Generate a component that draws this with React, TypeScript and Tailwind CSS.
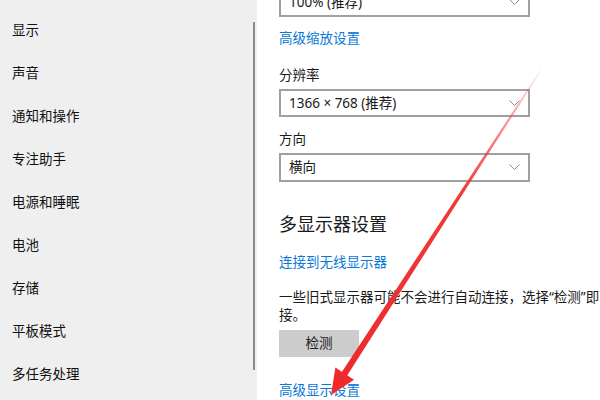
const font = { fontFamily: '"Noto Sans", "Noto Sans CJK SC", sans-serif' };

const navItems = ["显示", "声音", "通知和操作", "专注助手", "电源和睡眠", "电池", "存储", "平板模式", "多任务处理"];

function Chevron() {
  return (
    <svg width="11" height="6" viewBox="0 0 11 6" className="shrink-0">
      <path d="M0.5 0.5 L5.5 5.5 L10.5 0.5" fill="none" stroke="#8a8a8a" strokeWidth="1" />
    </svg>
  );
}

function Select({ value, className = "" }: { value: string; className?: string }) {
  return (
    <div
      className={`flex h-[29px] w-[251px] items-center justify-between border-2 border-[#a0a0a0] pl-[8px] pr-[8px] text-[13.5px] text-[#1a1a1a] ${className}`}
    >
      <span>{value}</span>
      <Chevron />
    </div>
  );
}

function Arrow() {
  // shaft from (541,70) to head base (344,374), head tip (331,395)
  return (
    <svg className="pointer-events-none absolute inset-0" width="600" height="400" viewBox="0 0 600 400">
      <defs>
        <linearGradient id="shaft" x1="541" y1="70" x2="344" y2="374" gradientUnits="userSpaceOnUse">
          <stop offset="0" stopColor="#f23a3a" stopOpacity="0.05" />
          <stop offset="0.15" stopColor="#f23a3a" stopOpacity="0.5" />
          <stop offset="0.4" stopColor="#f03030" stopOpacity="0.95" />
          <stop offset="1" stopColor="#ee2a2a" />
        </linearGradient>
      </defs>
      <polygon points="541.5,70.4 540.5,69.6 341.5,372.5 347,375.8" fill="url(#shaft)" />
      <polygon points="331,395 335.4,367.6 354,379.8" fill="#ee2a2a" />
    </svg>
  );
}

export default function App() {
  return (
    <div className="relative flex h-[400px] w-[600px] overflow-hidden bg-white" style={font}>
      <div className="flex h-full w-[257px] shrink-0 bg-[#efefef]">
        <div className="flex w-[253px] flex-col pt-[9px] pl-[12px]">
          {navItems.map((item) => (
            <div key={item} className="flex h-[43px] shrink-0 items-center text-[13.5px] text-[#111]">
              {item}
            </div>
          ))}
        </div>
        <div className="mt-[22px] h-[348px] w-[2px] bg-[#8c8c8c]" />
      </div>

      <div className="flex flex-col pl-[22px] -mt-[12px]">
        <Select value="100% (推荐)" />
        <div className="mt-[11px] h-[20px] text-[13.5px] leading-[20px] text-[#0a78d7]">高级缩放设置</div>
        <div className="mt-[17px] h-[20px] text-[13.5px] leading-[20px] text-[#1a1a1a]">分辨率</div>
        <Select value="1366 × 768 (推荐)" className="mt-[4px]" />
        <div className="mt-[12px] h-[20px] text-[13.5px] leading-[20px] text-[#1a1a1a]">方向</div>
        <Select value="横向" className="mt-[4px]" />
        <div className="mt-[29px] h-[26px] text-[18px] leading-[26px] text-[#1a1a1a]">多显示器设置</div>
        <div className="mt-[15px] h-[20px] text-[13.5px] leading-[20px] text-[#0a78d7]">连接到无线显示器</div>
        <div className="mt-[16px] w-[321px] text-[13.5px] leading-[18px] text-[#1a1a1a]">
          <div className="whitespace-nowrap">一些旧式显示器可能不会进行自动连接，选择“检测”即可尝试连</div>
          <div>接。</div>
        </div>
        <button className="mt-[6px] flex h-[28px] w-[80px] items-center justify-center bg-[#cccccc] text-[13.5px] text-[#1a1a1a]">
          检测
        </button>
        <div className="mt-[23px] h-[20px] text-[13.5px] leading-[20px] text-[#0a78d7]">高级显示设置</div>
      </div>

      <Arrow />
    </div>
  );
}
